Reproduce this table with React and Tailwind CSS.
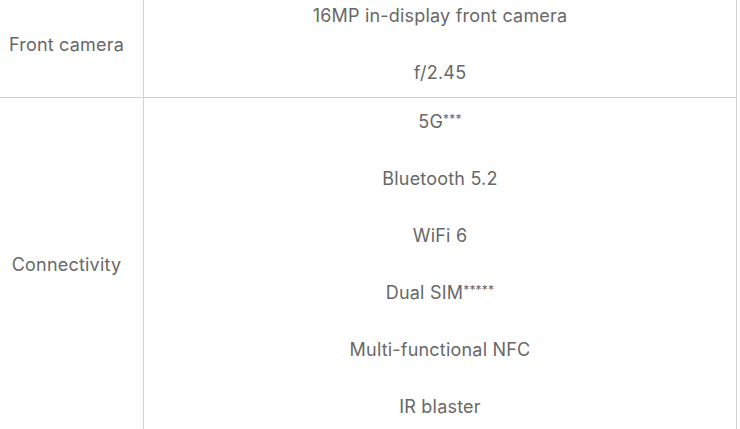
export default function App() {
  const rows = [
    { label: "Front camera", items: ["16MP in-display front camera", "f/2.45"] },
    {
      label: "Connectivity",
      items: [
        <>5G<sup className="text-[12px] top-[-5px]">***</sup></>,
        "Bluetooth 5.2",
        "WiFi 6",
        <>Dual SIM<sup className="text-[12px] top-[-5px]">*****</sup></>,
        "Multi-functional NFC",
        "IR blaster",
      ],
    },
  ];

  return (
    <div className="w-[740px] h-[429px] overflow-hidden bg-white font-['Inter',sans-serif] text-[18px] tracking-[0.2px] text-[#686868]">
      <div className="-mt-[8px] w-[737px] border-r border-[#d2d2d2]">
        {rows.map((row) => (
          <div key={row.label} className="grid grid-cols-[144px_1fr] border-b border-[#d2d2d2]">
            <div className="flex items-center justify-center pr-[10px] border-r border-[#d2d2d2] leading-[24px]">
              {row.label}
            </div>
            <div className="flex flex-col items-center gap-[33px] py-3 leading-[24px] text-center">
              {row.items.map((it, i) => (
                <div key={i}>{it}</div>
              ))}
            </div>
          </div>
        ))}
      </div>
    </div>
  );
}
